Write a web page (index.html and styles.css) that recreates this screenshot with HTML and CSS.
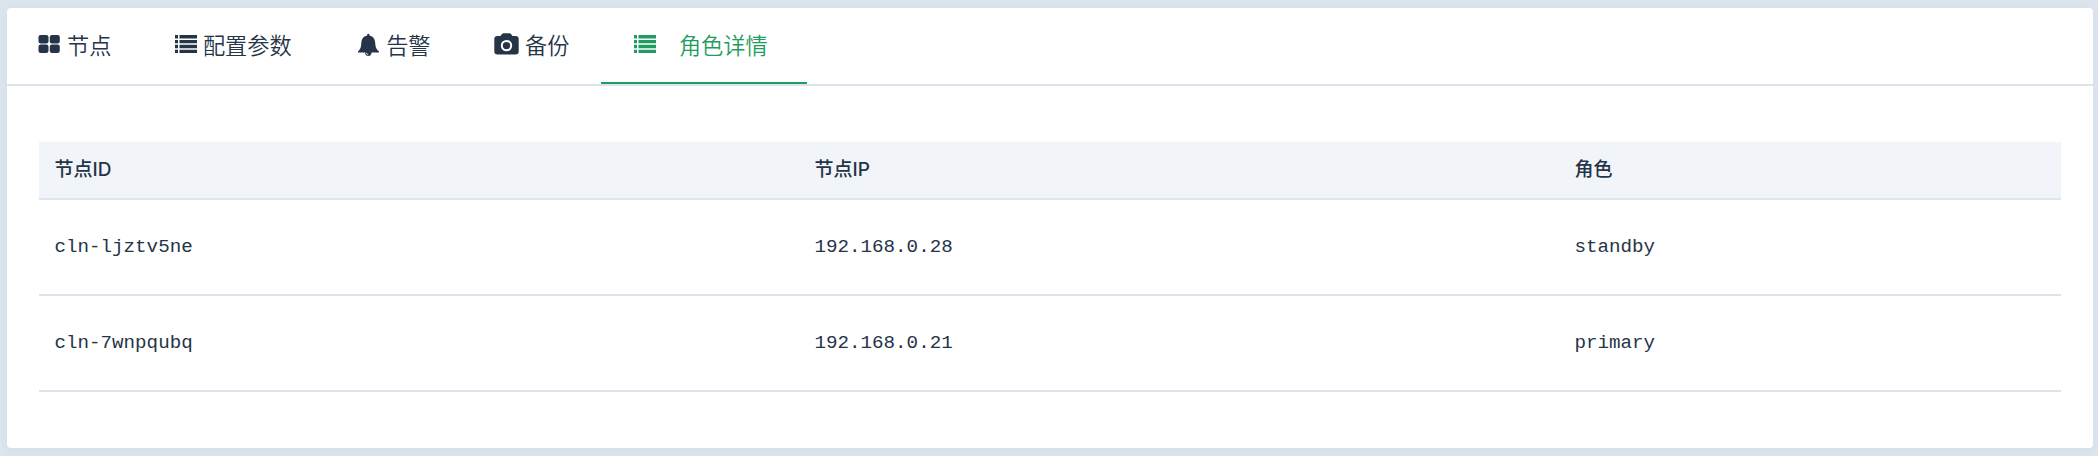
FILE: index.html
```html
<!DOCTYPE html>
<html lang="zh-CN">
<head>
<meta charset="utf-8">
<title>角色详情</title>
<link rel="stylesheet" href="styles.css">
</head>
<body>
<main class="card">
  <nav class="tabs">
    <a class="tab"><svg class="icon" width="28" height="24" viewBox="0 0 28 24"><rect x="-.5" y="3" width="10" height="8.400" rx="2.200"/><rect x="10.800" y="3" width="10" height="8.400" rx="2.200"/><rect x="-.5" y="12.600" width="10" height="8.400" rx="2.200"/><rect x="10.800" y="12.600" width="10" height="8.400" rx="2.200"/></svg>节点</a>
    <a class="tab"><svg class="icon" width="28" height="24" viewBox="0 0 28 24"><path d="M0 3h3v3.400H0zM4.500 3H22v3.400H4.500zM0 7.900h3v3.400H0zM4.500 7.900H22v3.400H4.500zM0 12.800h3v3.400H0zM4.500 12.800H22v3.400H4.500zM0 17.700h3v3.400H0zM4.500 17.700H22v3.400H4.500z"/></svg>配置参数</a>
    <a class="tab"><svg class="icon" width="31" height="24" viewBox="0 0 31 24"><path d="M12.200 3.500V2.600Q12.200 1.700 13.300 1.700T14.400 2.600V3.500C18.500 4.200 20 7.500 20.200 11C20.500 15.500 21.500 17.500 24 19.500V20.500H16.600Q16.200 24 13.300 24T10 20.500H3V19.500C5.300 17.500 6 15.500 6.300 11C6.500 7.500 8 4.200 12.200 3.500Z"/><path class="knock" d="M11.300 20.800Q11.500 22.500 13.300 22.700"/></svg>告警</a>
    <a class="tab"><svg class="icon" width="31" height="24" viewBox="0 0 31 24"><path d="M3.500 4H6.500L8 2Q8.500 1.300 9.500 1.300H15.500Q16.500 1.300 17 2L18.500 4H21.500Q24.700 4 24.700 7.200V19.300Q24.700 22.500 21.500 22.500H3.500Q.3 22.500.3 19.300V7.200Q.3 4 3.500 4Z"/><circle class="lens" cx="12.500" cy="13.600" r="4.700"/></svg>备份</a>
    <a class="tab tab-active"><svg class="icon" width="46" height="24" viewBox="0 0 46 24"><path d="M1 3h3v3.400H1zM5.500 3H23v3.400H5.500zM1 7.900h3v3.400H1zM5.500 7.900H23v3.400H5.500zM1 12.800h3v3.400H1zM5.500 12.800H23v3.400H5.500zM1 17.700h3v3.400H1zM5.500 17.700H23v3.400H5.500z"/></svg>角色详情</a>
  </nav>
  <section class="content">
    <table class="nodes">
      <colgroup><col class="col-id"><col class="col-ip"><col></colgroup>
      <thead><tr><th>节点ID</th><th>节点IP</th><th>角色</th></tr></thead>
      <tbody>
        <tr><td>cln-ljztv5ne</td><td>192.168.0.28</td><td>standby</td></tr>
        <tr><td>cln-7wnpqubq</td><td>192.168.0.21</td><td>primary</td></tr>
      </tbody>
    </table>
  </section>
</main>
</body>
</html>
```
FILE: styles.css
```css
* { box-sizing: border-box; }
body {
  margin: 0;
  padding: 8px 5px 8px 7px;
  height: 456px;
  background: #dce5ee;
  color: #253447;
  font-family: "Liberation Sans", "Noto Sans CJK SC", sans-serif;
}
.card {
  height: 440px;
  background: #fff;
  border-radius: 4px;
  box-shadow: 0 2px 8px rgba(60, 80, 130, .05);
}
.tabs {
  display: flex;
  height: 78px;
  border-bottom: 2px solid #dce5ee;
}
.tab {
  display: flex;
  align-items: center;
  height: 76px;
  padding: 2px 31.5px 0 32px;
  font-size: 22.2px;
  line-height: 32px;
  font-weight: 350;
  white-space: nowrap;
}
.tab-active {
  color: #1f9d61;
  padding-top: 4px;
  padding-right: 39px;
  border-bottom: 2px solid #1f9d61;
}
.icon { flex: none; fill: currentColor; margin-bottom: 6px; overflow: visible; }
.knock { fill: none; stroke: #fff; stroke-width: .8; }
.lens { fill: none; stroke: #fff; stroke-width: 2; }
.content { padding: 56px 32px 0; }
.nodes {
  width: 100%;
  table-layout: fixed;
  border-collapse: separate;
  border-spacing: 0;
}
.col-id { width: 760px; }
.col-ip { width: 760px; }
.nodes th {
  height: 58px;
  padding: 0 15.5px;
  background: #f1f5f9;
  border-bottom: 2px solid #dce5ee;
  font-family: Inter, "Noto Sans CJK SC", sans-serif;
  font-size: 19px;
  font-weight: 500;
  line-height: 28px;
  text-align: left;
}
.nodes td {
  height: 96px;
  padding: 0 15.5px;
  border-bottom: 2px solid #dce5ee;
  font-family: "Courier New", "Liberation Mono", monospace;
  font-size: 19.2px;
  line-height: 28px;
}
```
